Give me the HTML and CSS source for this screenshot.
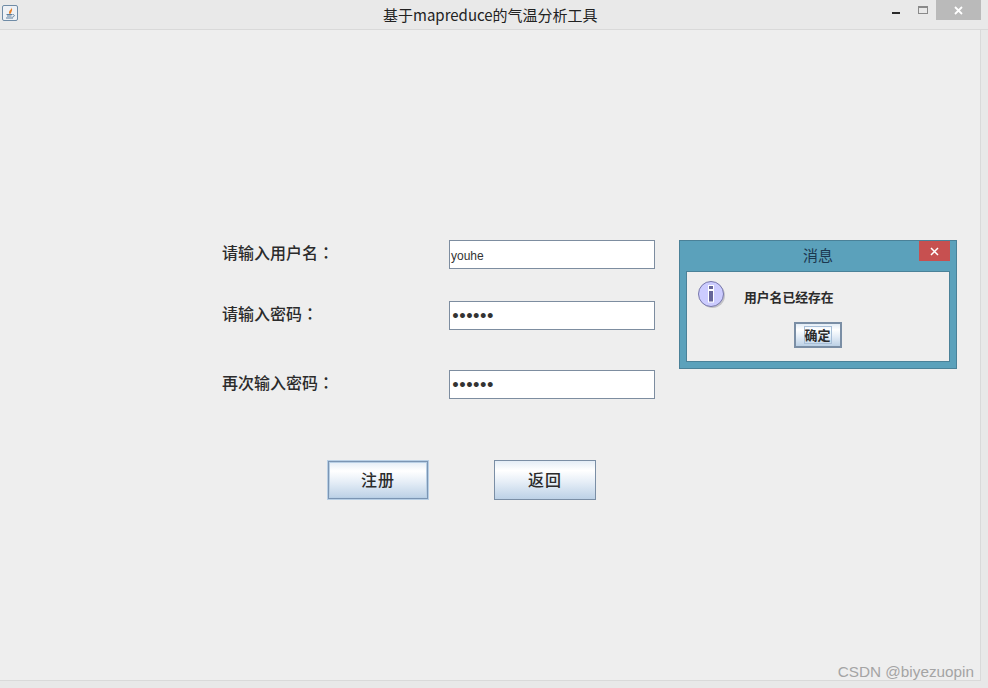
FILE: index.html
```html
<!DOCTYPE html>
<html lang="zh-CN">
<head>
<meta charset="utf-8">
<title>基于mapreduce的气温分析工具</title>
<link rel="stylesheet" href="styles.css">
</head>
<body>
<div class="window">
  <header class="titlebar">
    <span class="app-icon">
      <svg width="16" height="16" viewBox="0 0 16 16">
        <rect x="0.5" y="0.5" width="15" height="15" rx="1.5" fill="#eef1f5" stroke="#6f8ba6"/>
        <path d="M9.500 1.500C11 4 7 5 7 7.500C7 8.500 7.800 9.200 8.500 9.500C8 8 11.500 6.500 9.500 1.500Z" fill="#e8812a"/>
        <path d="M4.500 9.500H10M5 11H9.500M4 13H11M10.500 9.500C13 9.500 13 11.500 10.500 12" fill="none" stroke="#5d7f9e" stroke-width="1"/>
      </svg>
    </span>
    <h1 class="title">基于mapreduce的气温分析工具</h1>
    <div class="win-controls">
      <span class="ctl-min"></span>
      <span class="ctl-max"></span>
      <span class="ctl-close">
        <svg width="9" height="9" viewBox="0 0 9 9"><path d="M1 1L8 8M8 1L1 8" stroke="#fff" stroke-width="1.800"/></svg>
      </span>
    </div>
  </header>
  <main class="content">
    <form class="form">
      <label class="label">请输入用户名<span class="colon">：</span></label>
      <div class="field">youhe</div>
      <label class="label">请输入密码<span class="colon">：</span></label>
      <div class="field dots">••••••</div>
      <label class="label label-low">再次输入密码<span class="colon">：</span></label>
      <div class="field dots field-low">••••••</div>
    </form>
    <div class="actions">
      <button type="button" class="btn btn-focus">注册</button>
      <button type="button" class="btn">返回</button>
    </div>
    <section class="dialog">
      <div class="dialog-title">
        <span class="dialog-caption">消息</span>
        <span class="dialog-close">
          <svg width="9" height="9" viewBox="0 0 9 9"><path d="M1 1L8 8M8 1L1 8" stroke="#fff" stroke-width="1.500"/></svg>
        </span>
      </div>
      <div class="dialog-body">
        <div class="dialog-msg">
          <svg class="info-icon" width="30" height="30" viewBox="0 0 30 30">
            <circle cx="14.500" cy="14.500" r="12.500" fill="#8e8e96" opacity="0.450"/>
            <circle cx="13" cy="13" r="12.500" fill="#ccccff" stroke="#7777aa" stroke-width="1"/>
            <rect x="10" y="4" width="6" height="5" fill="#fff"/>
            <rect x="10" y="9" width="6" height="12.500" fill="#fff"/>
            <rect x="11" y="5" width="4" height="3" fill="#666699"/>
            <rect x="11" y="10" width="4" height="10.500" fill="#666699"/>
          </svg>
          <span class="dialog-text">用户名已经存在</span>
        </div>
        <button type="button" class="ok"><span class="ok-inner">确定</span></button>
      </div>
    </section>
    <div class="watermark">CSDN @biyezuopin</div>
  </main>
</div>
</body>
</html>
```
FILE: styles.css
```css
* { box-sizing: border-box; }
html, body { margin: 0; height: 100%; }
body {
  width: 988px;
  height: 688px;
  overflow: hidden;
  background: #e8e8e8;
  font-family: "Noto Sans CJK SC", "Liberation Sans", sans-serif;
  color: #222;
}
.window { display: flex; flex-direction: column; width: 988px; height: 688px; }
.titlebar {
  position: relative;
  display: flex;
  align-items: center;
  flex: none;
  height: 30px;
  padding: 0 0 5px 2px;
  background: #e9e9e9;
  border-bottom: 1px solid #d9d9d9;
}
.app-icon { display: flex; width: 16px; height: 16px; margin-top: 1px; }
.title {
  position: absolute;
  left: 383px;
  top: 5px;
  margin: 0;
  font-size: 15px;
  font-weight: 400;
  line-height: 20px;
  color: #222;
  white-space: nowrap;
}
.win-controls {
  position: absolute;
  right: 7px;
  top: 0;
  display: flex;
  align-items: flex-start;
}
.ctl-min { width: 8px; height: 2px; margin-top: 12px; margin-right: 18px; background: #2a2a2a; }
.ctl-max { width: 10px; height: 8px; margin-top: 6px; margin-right: 8px; border: 1px solid #8a8a8a; border-top-width: 2px; }
.ctl-close {
  display: flex;
  align-items: center;
  justify-content: center;
  width: 45px;
  height: 20px;
  background: #bababa;
}
.content {
  position: relative;
  flex: none;
  width: 981px;
  height: 651px;
  padding: 210px 0 0 222px;
  background: #eeeeee;
  border-right: 1px solid #d9d9d9;
  border-bottom: 1px solid #d9d9d9;
}
.form {
  display: grid;
  grid-template-columns: 227px 206px;
  grid-template-rows: 29px 29px 37px;
  row-gap: 32px;
}
.label-low, .field-low { margin-top: 8px; }
.label {
  display: flex;
  align-items: center;
  height: 29px;
  padding-bottom: 6px;
  font-size: 16px;
  font-weight: 500;
  line-height: 22px;
  color: #2b2b2b;
}
.colon { font-family: "Noto Sans CJK TC", sans-serif; }
.field {
  display: flex;
  align-items: center;
  height: 29px;
  padding: 2px 0 0 1px;
  background: #fff;
  border: 1px solid #7d8da0;
  font-family: "Liberation Sans", sans-serif;
  font-size: 12px;
  color: #333;
}
.dots {
  padding-top: 0;
  font-family: "DejaVu Sans", sans-serif;
  font-size: 14px;
  font-weight: 700;
  letter-spacing: -2px;
  color: #333;
}
.actions { display: flex; align-items: center; gap: 65px; margin: 61px 0 0 105px; }
.btn {
  width: 102px;
  height: 40px;
  padding: 0 0 2px;
  background: linear-gradient(180deg, #e4edf6 0%, #ffffff 25%, #e6eef7 55%, #bcd1e6 100%);
  font-family: "Noto Sans CJK SC", sans-serif;
  font-size: 16px;
  font-weight: 500;
  letter-spacing: 1px;
  color: #2b2b2b;
  border: 1px solid #7a8ea5;
}
.btn-focus {
  border: 2px solid #7b95b3;
  outline: 1px solid #b8cfe5;
  outline-offset: -1px;
  box-shadow: inset 0 0 0 1px #b8cfe5;
}
.dialog {
  position: absolute;
  left: 679px;
  top: 210px;
  width: 278px;
  height: 129px;
  display: flex;
  flex-direction: column;
  padding: 0 6px 6px 6px;
  background: #5ba1bb;
  border: 1px solid #4a8198;
}
.dialog-title { position: relative; flex: none; display: flex; justify-content: center; height: 30px; }
.dialog-caption { font-size: 15px; line-height: 28px; color: #1c3850; }
.dialog-close {
  position: absolute;
  right: 0;
  top: 0;
  display: flex;
  align-items: center;
  justify-content: center;
  width: 31px;
  height: 20px;
  background: #c75050;
}
.dialog-body {
  flex: 1;
  display: flex;
  flex-direction: column;
  align-items: center;
  background: #eeeeee;
  border: 1px solid #4a8198;
}
.dialog-msg { align-self: stretch; display: flex; align-items: flex-start; padding: 9px 0 0 11px; height: 50px; }
.info-icon { flex: none; }
.dialog-text { margin: 6px 0 0 16px; font-size: 12.800px; line-height: 20px; font-weight: 700; color: #2b2b2b; }
.ok {
  display: flex;
  align-items: center;
  justify-content: center;
  width: 48px;
  height: 26px;
  padding: 0;
  margin-right: 1px;
  background: linear-gradient(180deg, #e4edf6 0%, #ffffff 25%, #e6eef7 55%, #bcd1e6 100%);
  border: 2px solid #7a8ea5;
}
.ok-inner {
  display: block;
  width: 28px;
  height: 18px;
  border: 1px solid #a8bfd8;
  font-family: "Noto Sans CJK SC", sans-serif;
  font-size: 13px;
  line-height: 16px;
  font-weight: 700;
  color: #2b2b2b;
}
.watermark {
  position: absolute;
  right: 6px;
  bottom: 0;
  font-family: "Liberation Sans", sans-serif;
  font-size: 15.300px;
  line-height: 16px;
  color: #a4a4a4;
  white-space: nowrap;
}
```
